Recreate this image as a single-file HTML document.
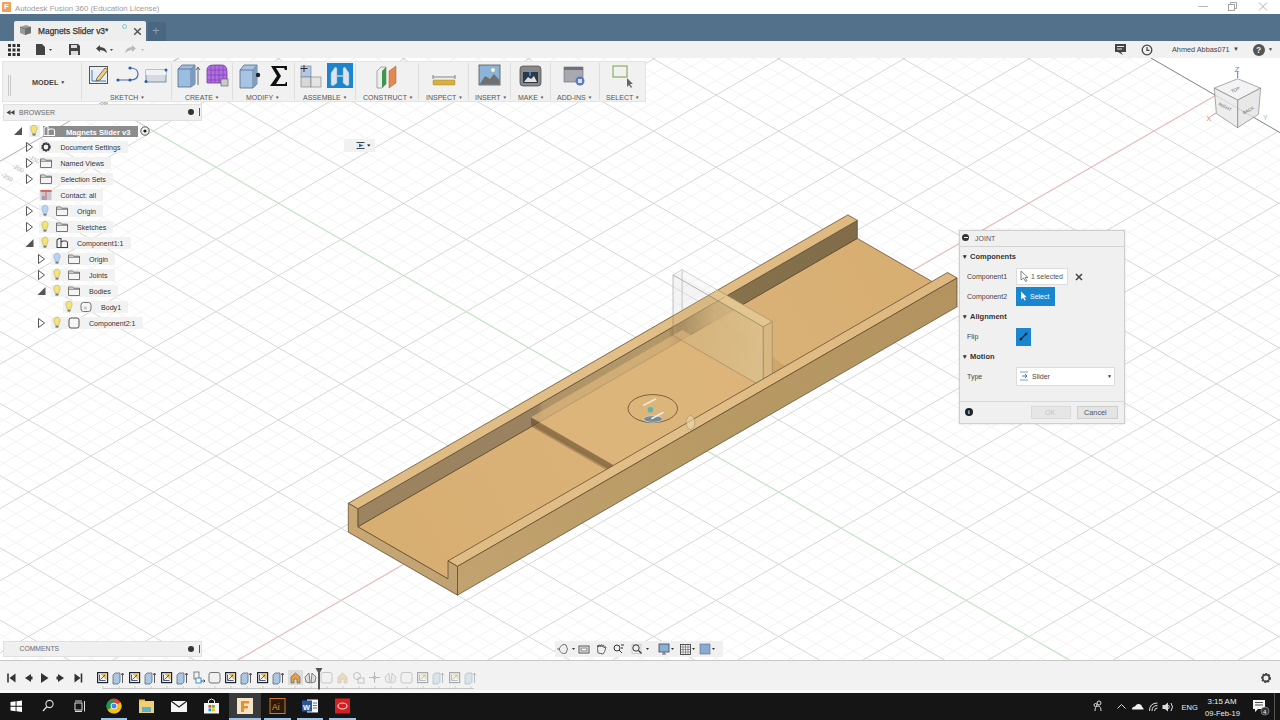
<!DOCTYPE html>
<html><head><meta charset="utf-8">
<style>
*{box-sizing:border-box;margin:0;padding:0}
html,body{width:1280px;height:720px;overflow:hidden;background:#fff;font-family:"Liberation Sans",sans-serif;color:#3c3c3c}
.a{position:absolute}
#title{left:0;top:0;width:1280px;height:14px;background:#fff}
#tabs{left:0;top:14px;width:1280px;height:27px;background:#54718c}
#qat{left:0;top:41px;width:1280px;height:17px;background:#f1f1f1}
#vp{left:0;top:0;width:1280px;height:720px}
#tl{left:0;top:660px;width:1280px;height:33px;background:#f2f2f2;border-top:1px solid #c8c8c8;border-bottom:3px solid #fafafa}
#task{left:0;top:693px;width:1280px;height:27px;background:#151515}
.t{position:absolute;white-space:nowrap;line-height:1}
.panel{background:#eeeeee;border:1px solid #d6d6d6}
.lbl{font-size:7px;color:#555;letter-spacing:0}
.row{position:absolute;height:12px;font-size:7.1px;color:#333;line-height:12px;white-space:nowrap}
.rbg{position:absolute;height:12px;background:rgba(238,238,238,0.85)}
</style></head><body>
<!-- viewport grid + model -->
<svg id="vp" class="a" width="1280" height="720" viewBox="0 0 1280 720">
<rect x="0" y="58" width="1280" height="602" fill="#ffffff"/>
<g clip-path="url(#vpclip)">
<defs><clipPath id="vpclip"><polygon points="0,161.25 178.8,58 1150.9,58 1280,132.6 1280,660 0,660"/></clipPath></defs>
<path d="M0 -708.38L1280 30.69M0 -693.94L1280 45.13M0 -665.06L1280 74.01M0 -650.62L1280 88.45M0 -636.18L1280 102.89M0 -621.74L1280 117.34M0 -592.86L1280 146.22M0 -578.42L1280 160.65M0 -563.98L1280 175.10M0 -549.54L1280 189.53M0 -520.66L1280 218.41M0 -506.22L1280 232.85M0 -491.78L1280 247.29M0 -477.34L1280 261.73M0 -448.46L1280 290.61M0 -434.02L1280 305.05M0 -419.58L1280 319.49M0 -405.14L1280 333.93M0 -376.26L1280 362.81M0 -361.82L1280 377.25M0 -347.38L1280 391.69M0 -332.94L1280 406.13M0 -304.06L1280 435.01M0 -289.62L1280 449.45M0 -275.18L1280 463.89M0 -260.74L1280 478.33M0 -231.86L1280 507.21M0 -217.42L1280 521.65M0 -202.98L1280 536.10M0 -188.54L1280 550.53M0 -159.66L1280 579.41M0 -145.22L1280 593.86M0 -130.78L1280 608.29M0 -116.34L1280 622.74M0 -87.46L1280 651.62M0 -73.02L1280 666.05M0 -58.58L1280 680.50M0 -44.14L1280 694.93M0 -15.26L1280 723.82M0 -0.82L1280 738.25M0 13.62L1280 752.70M0 28.06L1280 767.13M0 56.94L1280 796.01M0 71.38L1280 810.46M0 85.82L1280 824.89M0 100.26L1280 839.34M0 129.14L1280 868.22M0 143.58L1280 882.65M0 158.02L1280 897.10M0 172.46L1280 911.54M0 201.34L1280 940.41M0 215.78L1280 954.86M0 230.22L1280 969.30M0 244.66L1280 983.74M0 273.54L1280 1012.62M0 287.98L1280 1027.06M0 302.42L1280 1041.49M0 316.86L1280 1055.93M0 345.74L1280 1084.82M0 360.18L1280 1099.26M0 374.62L1280 1113.69M0 389.06L1280 1128.13M0 417.94L1280 1157.02M0 432.38L1280 1171.45M0 446.82L1280 1185.89M0 461.26L1280 1200.34M0 490.14L1280 1229.22M0 504.58L1280 1243.65M0 519.02L1280 1258.10M0 533.46L1280 1272.54M0 562.34L1280 1301.41M0 576.78L1280 1315.86M0 591.22L1280 1330.30M0 605.66L1280 1344.74M0 634.54L1280 1373.62M0 648.98L1280 1388.06M0 663.42L1280 1402.50M0 677.86L1280 1416.93M0 32.01L1280 -707.06M0 46.45L1280 -692.62M0 60.89L1280 -678.18M0 89.77L1280 -649.30M0 104.21L1280 -634.86M0 118.65L1280 -620.42M0 133.09L1280 -605.98M0 161.97L1280 -577.10M0 176.41L1280 -562.66M0 190.85L1280 -548.22M0 205.29L1280 -533.78M0 234.17L1280 -504.90M0 248.61L1280 -490.46M0 263.05L1280 -476.02M0 277.49L1280 -461.58M0 306.37L1280 -432.70M0 320.81L1280 -418.26M0 335.25L1280 -403.82M0 349.69L1280 -389.38M0 378.57L1280 -360.50M0 393.01L1280 -346.06M0 407.45L1280 -331.62M0 421.89L1280 -317.18M0 450.77L1280 -288.30M0 465.21L1280 -273.86M0 479.65L1280 -259.42M0 494.09L1280 -244.98M0 522.97L1280 -216.10M0 537.41L1280 -201.66M0 551.85L1280 -187.22M0 566.29L1280 -172.78M0 595.17L1280 -143.90M0 609.61L1280 -129.46M0 624.05L1280 -115.02M0 638.49L1280 -100.58M0 667.37L1280 -71.70M0 681.81L1280 -57.26M0 696.25L1280 -42.82M0 710.69L1280 -28.38M0 739.57L1280 0.50M0 754.01L1280 14.94M0 768.45L1280 29.38M0 782.89L1280 43.82M0 811.77L1280 72.70M0 826.21L1280 87.14M0 840.65L1280 101.58M0 855.09L1280 116.02M0 883.97L1280 144.90M0 898.41L1280 159.34M0 912.85L1280 173.78M0 927.29L1280 188.22M0 956.17L1280 217.10M0 970.61L1280 231.54M0 985.05L1280 245.98M0 999.49L1280 260.42M0 1028.37L1280 289.30M0 1042.81L1280 303.74M0 1057.25L1280 318.18M0 1071.69L1280 332.62M0 1100.57L1280 361.50M0 1115.01L1280 375.94M0 1129.45L1280 390.38M0 1143.89L1280 404.82M0 1172.77L1280 433.70M0 1187.21L1280 448.14M0 1201.65L1280 462.58M0 1216.09L1280 477.02M0 1244.97L1280 505.90M0 1259.41L1280 520.34M0 1273.85L1280 534.78M0 1288.29L1280 549.22M0 1317.17L1280 578.10M0 1331.61L1280 592.54M0 1346.05L1280 606.98M0 1360.49L1280 621.42M0 1389.37L1280 650.30M0 1403.81L1280 664.74M0 1418.25L1280 679.18" stroke="#f3f3f3" stroke-width="1" fill="none"/>
<path d="M0 -679.50L1280 59.57M0 -607.30L1280 131.77M0 -535.10L1280 203.98M0 -462.90L1280 276.17M0 -390.70L1280 348.37M0 -318.50L1280 420.57M0 -246.30L1280 492.77M0 -174.10L1280 564.97M0 -101.90L1280 637.17M0 -29.70L1280 709.38M0 42.50L1280 781.58M0 114.70L1280 853.77M0 186.90L1280 925.98M0 259.10L1280 998.17M0 331.30L1280 1070.38M0 403.50L1280 1142.58M0 475.70L1280 1214.78M0 547.90L1280 1286.97M0 620.10L1280 1359.18M0 75.33L1280 -663.74M0 147.53L1280 -591.54M0 219.73L1280 -519.34M0 291.93L1280 -447.14M0 364.13L1280 -374.94M0 436.33L1280 -302.74M0 508.53L1280 -230.54M0 580.73L1280 -158.34M0 652.93L1280 -86.14M0 725.13L1280 -13.94M0 797.33L1280 58.26M0 869.53L1280 130.46M0 941.73L1280 202.66M0 1013.93L1280 274.86M0 1086.13L1280 347.06M0 1158.33L1280 419.26M0 1230.53L1280 491.46M0 1302.73L1280 563.66M0 1374.93L1280 635.86" stroke="#d6d6d6" stroke-width="1" fill="none"/>
<path d="M0 42.50L1280 781.58" stroke="#c4e8c4" stroke-width="1.1"/>
<path d="M0 797.33L1280 58.26" stroke="#ecbcbc" stroke-width="1.1"/>
</g>
<path d="M0 161.25 L178.8 58" stroke="#a8a8a8" stroke-width="0.9"/>
<path d="M1150.9 58 L1280 132.6" stroke="#808080" stroke-width="1"/>
<g font-family="Liberation Sans" font-size="6" fill="#b4b4b4"><text transform="translate(1,176) rotate(30)">-250</text><text transform="translate(12,167) rotate(30)">-200</text><text transform="translate(28,158) rotate(30)">-150</text></g>
<defs>
<linearGradient id="gFloor" gradientUnits="userSpaceOnUse" x1="350" y1="560" x2="940" y2="240"><stop offset="0" stop-color="#d7ad71"/><stop offset="0.5" stop-color="#dbb379"/><stop offset="1" stop-color="#d7ad71"/></linearGradient>
<linearGradient id="gTop" gradientUnits="userSpaceOnUse" x1="350" y1="540" x2="950" y2="220"><stop offset="0" stop-color="#dfbb84"/><stop offset="0.5" stop-color="#e2be88"/><stop offset="1" stop-color="#ddb77e"/></linearGradient>
<linearGradient id="gFront" gradientUnits="userSpaceOnUse" x1="460" y1="590" x2="960" y2="300"><stop offset="0" stop-color="#c2a36f"/><stop offset="0.5" stop-color="#b89a65"/><stop offset="1" stop-color="#b39460"/></linearGradient>
<linearGradient id="gInner" gradientUnits="userSpaceOnUse" x1="358" y1="0" x2="858" y2="0">
 <stop offset="0" stop-color="#9c8460"/><stop offset="0.36" stop-color="#9a8260"/><stop offset="0.37" stop-color="#b09468"/><stop offset="0.62" stop-color="#b49868"/><stop offset="0.64" stop-color="#8a7450"/><stop offset="1" stop-color="#806c48"/></linearGradient>
<linearGradient id="gEnd" x1="0" y1="0" x2="1" y2="1"><stop offset="0" stop-color="#c9a872"/><stop offset="1" stop-color="#c0a272"/></linearGradient>
</defs>
<polygon points="357.8,526.8 857.3,238.4 947.5,290.5 448.0,578.9" fill="url(#gFloor)" stroke="#5e4a2c" stroke-width="0.75" stroke-linejoin="round"/>
<polygon points="357.8,508.8 857.3,220.4 857.3,238.4 357.8,526.8" fill="url(#gInner)" stroke="#5e4a2c" stroke-width="0.75" stroke-linejoin="round"/>
<polygon points="348.3,503.3 847.8,214.9 857.3,220.4 357.8,508.8" fill="url(#gTop)" stroke="#5e4a2c" stroke-width="0.75" stroke-linejoin="round"/>
<polygon points="531.0,417.3 682.1,330.1 772.3,382.1 621.2,469.4" fill="#ddb67c" fill-opacity="0.72"/>
<linearGradient id="gBand" gradientUnits="userSpaceOnUse" x1="573.5" y1="451.3" x2="578.2" y2="443.1"><stop offset="0" stop-color="#6a5030" stop-opacity="0.2"/><stop offset="0.3" stop-color="#6a5030" stop-opacity="0.68"/><stop offset="0.8" stop-color="#6a5030" stop-opacity="0.62"/><stop offset="1" stop-color="#6a5030" stop-opacity="0.1"/></linearGradient>
<polygon points="531.0,417.3 621.2,469.4 621.2,478.9 531.0,426.8" fill="url(#gBand)"/>
<clipPath id="belowWall"><polygon points="261.7,553.3 934.4,164.9 1280.0,720.0 0.0,720.0"/></clipPath>
<clipPath id="aboveWall"><polygon points="261.7,553.3 934.4,164.9 1280.0,0.0 0.0,0.0"/></clipPath>
<polygon points="682.1,269.6 708.1,306.6 798.3,376.6 772.3,391.6" fill="#5a4020" fill-opacity="0.10" clip-path="url(#belowWall)"/>
<polygon points="673.0,274.8 763.2,326.9 763.2,387.4 673.0,335.3" fill="#e4e4e4" fill-opacity="0.4" stroke="#b0b0b0" stroke-width="0.8" clip-path="url(#aboveWall)"/>
<path d="M682.1 269.6 L682.1 330.1" stroke="#b8b8b8" stroke-width="0.8" clip-path="url(#aboveWall)"/>
<path d="M673.0 326.8 L673.0 335.3" stroke="#8a7a60" stroke-width="0.6" stroke-opacity="0.6"/>
<polygon points="673.0,274.8 682.1,269.6 772.3,321.6 763.2,326.9" fill="#e0e0e0" fill-opacity="0.2" stroke="#b8b8b8" stroke-width="0.6" clip-path="url(#aboveWall)"/>
<polygon points="673.0,274.8 682.1,269.6 772.3,321.6 763.2,326.9" fill="#e2c690" stroke="#a08a66" stroke-width="0.6" clip-path="url(#belowWall)"/>
<polygon points="763.2,326.9 772.3,321.6 772.3,382.1 763.2,387.4" fill="#d8b880" stroke="#9a8260" stroke-width="0.6"/>
<linearGradient id="gPlate" gradientUnits="userSpaceOnUse" x1="673" y1="0" x2="764" y2="0"><stop offset="0" stop-color="#d2b27c" stop-opacity="0.35"/><stop offset="0.45" stop-color="#d6b882" stop-opacity="0.85"/><stop offset="1" stop-color="#dbbf8a" stop-opacity="0.97"/></linearGradient>
<polygon points="673.0,274.8 763.2,326.9 763.2,387.4 673.0,335.3" fill="url(#gPlate)" stroke="#9a8262" stroke-width="0.6" clip-path="url(#belowWall)"/>
<path d="M663.5 321.3 L715.5 291.3 M673.0 326.8 L725.0 296.8" stroke="#7a6444" stroke-width="0.6" stroke-opacity="0.5"/>
<polygon points="448.0,560.9 947.5,272.5 957.0,278.0 457.5,566.4" fill="url(#gTop)" stroke="#5e4a2c" stroke-width="0.75" stroke-linejoin="round"/>
<polygon points="457.5,566.4 957.0,278.0 957.0,306.8 457.5,595.1" fill="url(#gFront)" stroke="#5e4a2c" stroke-width="0.75" stroke-linejoin="round"/>
<polygon points="348.3,503.3 357.8,508.8 357.8,526.8 448.0,578.9 448.0,560.9 457.5,566.4 457.5,595.1 348.3,532.1" fill="url(#gEnd)" stroke="#5e4a2c" stroke-width="0.75" stroke-linejoin="round"/>
<ellipse cx="652.8" cy="408.6" rx="24.7" ry="14" fill="none" stroke="#6a5030" stroke-width="0.85"/>
<path d="M643.5 405.3 L655.6 399" stroke="#f4e8e0" stroke-width="1.5" stroke-linecap="round"/>
<circle cx="650.4" cy="409.8" r="2.8" fill="#62b4a8"/>
<ellipse cx="653" cy="419" rx="9.5" ry="3.3" fill="#7a8a92" stroke="#c8d4d0" stroke-width="0.8"/>
<path d="M651.8 418.5 L662.9 412.6" stroke="#f6f0ea" stroke-width="1.5" stroke-linecap="round"/>
<ellipse cx="690.5" cy="422.5" rx="4.3" ry="7" fill="#ecdcb0" fill-opacity="0.55" stroke="#9a8050" stroke-width="0.6" stroke-opacity="0.8"/>
</svg>

<div id="title" class="a">
  <div class="a" style="left:2px;top:2px;width:9px;height:10px;background:#f0a050;border-radius:1px"></div>
  <div class="t" style="left:4px;top:3px;font-size:8px;font-weight:bold;color:#fff">F</div>
  <div class="t" style="left:15px;top:4.5px;font-size:7.8px;color:#9a9a9a">Autodesk Fusion 360 (Education License)</div>
  <svg class="a" style="left:1195px;top:0" width="85" height="14" viewBox="1195 0 85 14"><path d="M1198.5 6.5 H1208" stroke="#b4b4b4" stroke-width="1"/><rect x="1228.5" y="4.5" width="6" height="6" fill="none" stroke="#9a9a9a" stroke-width="0.9"/><path d="M1230.5 4.5 V2.5 H1236.5 V8.5 H1234.5" fill="none" stroke="#9a9a9a" stroke-width="0.9"/><path d="M1259 2.5 L1267 10.5 M1267 2.5 L1259 10.5" stroke="#b0b0b0" stroke-width="1"/></svg>
</div>

<div id="tabs" class="a">
  <div class="a" style="left:14px;top:7px;width:132px;height:20px;background:#eeeeee;border-radius:2px 2px 0 0"></div>
  <div class="a" style="left:148px;top:8px;width:18px;height:19px;background:#4a6681"></div>
  <div class="t" style="left:152px;top:10px;font-size:13px;color:#8aa0b6">+</div>
  <svg class="a" style="left:19px;top:10px" width="13" height="12" viewBox="0 0 13 12"><path d="M1 3 L7 1 L12 3 L12 9 L6 11 L1 9Z" fill="#9a9a9a"/><path d="M1 3 L6 5 L12 3" fill="none" stroke="#6e6e6e" stroke-width="0.8"/><path d="M6 5 L6 11 L12 9 L12 3Z" fill="#6f6f6f"/></svg>
  <div class="t" style="left:38px;top:13.3px;font-size:8.4px;color:#333;font-weight:normal;-webkit-text-stroke:0.25px #333">Magnets Slider v3*</div>
  <div class="a" style="left:122px;top:10px;width:5px;height:5px;border:1px solid #7cc;border-radius:50%"></div>
  <svg class="a" style="left:133px;top:13px" width="9" height="9" viewBox="0 0 9 9"><path d="M1.2 1.2 L7.8 7.8 M7.8 1.2 L1.2 7.8" stroke="#555" stroke-width="1.5"/></svg>
</div>

<div id="qat" class="a">
  <svg class="a" style="left:8px;top:3px" width="12" height="12" viewBox="0 0 12 12"><g fill="#333"><rect x="0" y="0" width="3" height="3"/><rect x="4.5" y="0" width="3" height="3"/><rect x="9" y="0" width="3" height="3"/><rect x="0" y="4.5" width="3" height="3"/><rect x="4.5" y="4.5" width="3" height="3"/><rect x="9" y="4.5" width="3" height="3"/><rect x="0" y="9" width="3" height="3"/><rect x="4.5" y="9" width="3" height="3"/><rect x="9" y="9" width="3" height="3"/></g></svg>
  <svg class="a" style="left:36px;top:3px" width="18" height="11" viewBox="0 0 18 11"><path d="M0 0 H6 L9 3 V11 H0Z" fill="#444"/><path d="M13 5 L16 5 L14.5 7Z" fill="#444"/></svg>
  <svg class="a" style="left:69px;top:3px" width="11" height="11" viewBox="0 0 11 11"><path d="M0 0 H9 L11 2 V11 H0Z" fill="#444"/><rect x="2" y="1" width="6" height="3" fill="#ddd"/><rect x="2" y="7" width="7" height="4" fill="#ddd"/></svg>
  <svg class="a" style="left:96px;top:4px" width="20" height="9" viewBox="0 0 20 9"><path d="M0 3.5 L4 0 V2 Q10 2 11 8 Q8 5 4 5 V7Z" fill="#444"/><path d="M14 4 L17 4 L15.5 6Z" fill="#444"/></svg>
  <svg class="a" style="left:125px;top:4px" width="20" height="9" viewBox="0 0 20 9"><path d="M11 3.5 L7 0 V2 Q1 2 0 8 Q3 5 7 5 V7Z" fill="#bbb"/><path d="M16 4 L19 4 L17.5 6Z" fill="#bbb"/></svg>
  <!-- right side -->
  <svg class="a" style="left:1115px;top:3px" width="11" height="11" viewBox="0 0 11 11"><path d="M0 0 H11 V8 H6 L8 11 L3 8 H0Z" fill="#444"/><rect x="2" y="2" width="7" height="1" fill="#eee"/><rect x="2" y="4.5" width="5" height="1" fill="#eee"/></svg>
  <svg class="a" style="left:1141px;top:3px" width="12" height="12" viewBox="0 0 12 12"><circle cx="6" cy="6" r="4.8" fill="none" stroke="#444" stroke-width="1.3"/><path d="M6 3 V6.3 H8.5" fill="none" stroke="#444" stroke-width="1.2"/></svg>
  <div class="t" style="left:1172px;top:5px;font-size:7.3px;color:#444">Ahmed Abbas071</div>
  <div class="t" style="left:1233px;top:5px;font-size:6px;color:#444">&#x25BC;</div>
  <div class="a" style="left:1253px;top:3px;width:12px;height:12px;background:#555;border-radius:50%"></div>
  <div class="t" style="left:1256px;top:5px;font-size:8.5px;color:#eee;font-weight:bold">?</div>
  <div class="t" style="left:1268px;top:6px;font-size:5px;color:#444">&#x25BC;</div>
</div>

<!-- TOOLBAR -->
<div class="a" style="left:2px;top:61px;width:644px;height:41px;background:#f1f1f1;border:1px solid #e4e4e4"></div>
<div class="a" style="left:81px;top:63px;width:1px;height:37px;background:#dedede"></div>
<div class="a" style="left:171px;top:63px;width:1px;height:37px;background:#dedede"></div>
<div class="a" style="left:232px;top:63px;width:1px;height:37px;background:#dedede"></div>
<div class="a" style="left:294px;top:63px;width:1px;height:37px;background:#dedede"></div>
<div class="a" style="left:355px;top:63px;width:1px;height:37px;background:#dedede"></div>
<div class="a" style="left:418px;top:63px;width:1px;height:37px;background:#dedede"></div>
<div class="a" style="left:468px;top:63px;width:1px;height:37px;background:#dedede"></div>
<div class="a" style="left:510px;top:63px;width:1px;height:37px;background:#dedede"></div>
<div class="a" style="left:550px;top:63px;width:1px;height:37px;background:#dedede"></div>
<div class="a" style="left:599px;top:63px;width:1px;height:37px;background:#dedede"></div>
<div class="a" style="left:8px;top:75px;width:1px;height:21px;background:#c8c8c8"></div>
<div class="a" style="left:10px;top:75px;width:1px;height:21px;background:#c8c8c8"></div>
<div class="t" style="left:32px;top:79px;font-size:7.3px;font-weight:bold;color:#444">MODEL <span style="font-size:5px;vertical-align:1px">&#x25BC;</span></div>
<!-- labels -->
<div class="t lbl" style="left:110px;top:94px">SKETCH <span style="font-size:4.5px;vertical-align:1px">&#x25BC;</span></div>
<div class="t lbl" style="left:185px;top:94px">CREATE <span style="font-size:4.5px;vertical-align:1px">&#x25BC;</span></div>
<div class="t lbl" style="left:246px;top:94px">MODIFY <span style="font-size:4.5px;vertical-align:1px">&#x25BC;</span></div>
<div class="t lbl" style="left:303px;top:94px">ASSEMBLE <span style="font-size:4.5px;vertical-align:1px">&#x25BC;</span></div>
<div class="t lbl" style="left:363px;top:94px">CONSTRUCT <span style="font-size:4.5px;vertical-align:1px">&#x25BC;</span></div>
<div class="t lbl" style="left:426px;top:94px">INSPECT <span style="font-size:4.5px;vertical-align:1px">&#x25BC;</span></div>
<div class="t lbl" style="left:475px;top:94px">INSERT <span style="font-size:4.5px;vertical-align:1px">&#x25BC;</span></div>
<div class="t lbl" style="left:518px;top:94px">MAKE <span style="font-size:4.5px;vertical-align:1px">&#x25BC;</span></div>
<div class="t lbl" style="left:557px;top:94px">ADD-INS <span style="font-size:4.5px;vertical-align:1px">&#x25BC;</span></div>
<div class="t lbl" style="left:606px;top:94px">SELECT <span style="font-size:4.5px;vertical-align:1px">&#x25BC;</span></div>
<!-- icons -->
<svg class="a" style="left:0;top:56px" width="650" height="36" viewBox="0 56 650 36">
 <!-- sketch -->
 <rect x="89.5" y="66.5" width="18" height="17" fill="#e8eef4" stroke="#555" stroke-width="1"/>
 <path d="M92 81 H106 M92 81 V70" stroke="#4a7ab0" stroke-width="1"/>
 <path d="M97 78 L105 68 L108 70 L100 80 L96 81Z" fill="#f0d070" stroke="#555" stroke-width="0.8"/>
 <!-- line arc -->
 <path d="M117 80 H130 Q138 80 138 74 Q138 68 130 68" fill="none" stroke="#4a6fa8" stroke-width="1.2"/>
 <circle cx="118" cy="80" r="1.6" fill="#2a5fb0"/><circle cx="130" cy="80" r="1.6" fill="#2a5fb0"/><circle cx="130" cy="68" r="1.6" fill="#2a5fb0"/>
 <!-- rect -->
 <rect x="146" y="70" width="20" height="12" fill="#d4dae4" stroke="#6a7a90" stroke-width="0.8"/>
 <rect x="146" y="70" width="20" height="5" fill="#eef2f6"/>
 <circle cx="146" cy="81.5" r="1.5" fill="#2a5fb0"/><circle cx="166" cy="70" r="1.5" fill="#2a5fb0"/>
 <!-- extrude box -->
 <path d="M178 69 L182 65 L195 65 L195 84 L191 87 L178 87Z" fill="#9bbde0" stroke="#5a6a80" stroke-width="0.8"/>
 <path d="M178 69 L191 69 L195 65 M191 69 V87" fill="none" stroke="#5a6a80" stroke-width="0.8"/>
 <path d="M191 69 L195 65 V84 L191 87Z" fill="#7a9cc0"/>
 <path d="M198 85 V68 M196 70 L198 67 L200 70" stroke="#444" stroke-width="0.8" fill="none"/>
 <!-- mesh -->
 <path d="M207 70 Q207 65 214 65 H222 Q227 65 227 72 V83 H207Z" fill="#b070e0" stroke="#7040a0" stroke-width="0.8"/>
 <path d="M207 70 H227 M207 75 H227 M207 80 H227 M211 65 V83 M215 65 V83 M219 65 V83 M223 65 V83" stroke="#7a3ab0" stroke-width="0.6"/>
 <rect x="221" y="79" width="7" height="7" fill="#ccc" stroke="#555" stroke-width="0.6"/>
 <!-- press pull -->
 <path d="M240 70 L244 65 L257 65 L257 84 L253 88 L240 88Z" fill="#a8c4e4" stroke="#5a6a80" stroke-width="0.8"/>
 <path d="M240 70 H253 L257 65 M253 70 V88" fill="none" stroke="#5a6a80" stroke-width="0.8"/>
 <path d="M253 70 L257 65 V84 L253 88Z" fill="#7fa0c4"/>
 <circle cx="258" cy="75" r="2.2" fill="#222"/>
 <!-- sigma -->
 <path d="M271 66 H287 V70 H285 L284 68 H276 L281 76 L276 84 H285 L286 82 H287 V86 H270 L277 76Z" fill="#111"/>
 <!-- new component -->
 <rect x="301" y="66" width="10" height="11" fill="#b0c8e4" stroke="#6a7a90" stroke-width="0.6"/>
 <rect x="301" y="77" width="10" height="10" fill="#d8d8d8" stroke="#7a7a7a" stroke-width="0.6"/>
 <rect x="311" y="77" width="10" height="10" fill="#e4e4e4" stroke="#7a7a7a" stroke-width="0.6"/>
 <path d="M304 65 V72 M300.5 68.5 H307.5" stroke="#333" stroke-width="1"/>
 <!-- joint (highlighted) -->
 <rect x="327" y="63" width="26" height="25" fill="#1b86cf"/>
 <path d="M331 73 L335 67 L337 68 L337 83 L333 86 L331 85Z" fill="#d8e4ee" stroke="#8aa" stroke-width="0.5"/>
 <path d="M349 73 L345 67 L343 68 L343 83 L347 86 L349 85Z" fill="#d8e4ee" stroke="#8aa" stroke-width="0.5"/>
 <path d="M337 76 H343" stroke="#d8e4ee" stroke-width="1.2"/>
 <!-- construct -->
 <path d="M377 71 L381 67 L386 67 L386 84 L382 88 L377 88Z" fill="#eee" stroke="#777" stroke-width="0.6"/>
 <path d="M382 71 L386 67 V84 L382 88Z" fill="#3a9a4a"/>
 <path d="M389 71 L396 66 V83 L389 88Z" fill="#e08a50" stroke="#a06030" stroke-width="0.5"/>
 <!-- inspect -->
 <path d="M433 75 V79 M455 75 V79 M433 77 H455" stroke="#555" stroke-width="0.7"/>
 <rect x="433" y="80" width="22" height="5" rx="1" fill="#d8b040" stroke="#a88a30" stroke-width="0.5"/>
 <!-- insert -->
 <rect x="479" y="65" width="21" height="20" fill="#8cb4d8" stroke="#555" stroke-width="0.8"/>
 <path d="M479.5 84.5 L485 76 L490 79 L494 74 L499.5 80 V84.5Z" fill="#707070"/>
 <circle cx="493" cy="70" r="2" fill="#f4f4d0"/>
 <!-- make -->
 <rect x="520" y="66" width="21" height="20" rx="3" fill="#888" stroke="#555" stroke-width="0.8"/>
 <rect x="523" y="72" width="15" height="11" fill="#2a3a4a"/>
 <path d="M524 82 L528 77 L531 79 L534 76 L537 82Z" fill="#e0e0e0"/>
 <path d="M530 71 V76" stroke="#5ab0f0" stroke-width="1.2"/>
 <!-- add-ins -->
 <rect x="564" y="67" width="19" height="15" fill="#a8a8b0" stroke="#6a6a70" stroke-width="0.6"/>
 <rect x="564" y="67" width="19" height="3" fill="#707078"/>
 <circle cx="580" cy="81" r="4.5" fill="#5a7ac0"/>
 <rect x="578" y="79" width="4" height="4" fill="#dde"/>
 <!-- select -->
 <rect x="613" y="66" width="14" height="11" fill="none" stroke="#8ab060" stroke-width="1.2"/>
 <path d="M627 78 L627 87 L629 85 L631 88 L632 87 L630 84 L633 84Z" fill="#666"/>
</svg>

<!-- BROWSER -->
<div class="a" style="left:3px;top:104px;width:199px;height:16.5px;background:#f0f0f0;border:1px solid #e0e0e0"></div>
<svg class="a" style="left:99px;top:100px" width="12" height="8" viewBox="0 0 12 8"><path d="M2 5 Q6 1 9 3 Q8 5 5 4" fill="none" stroke="#aaa" stroke-width="0.8"/></svg>
<svg class="a" style="left:6px;top:109px" width="10" height="7" viewBox="0 0 10 7"><path d="M0.5 3.5 L4.5 1 V6Z M4.5 3.5 L8.5 1 V6Z" fill="#444"/></svg>
<div class="t" style="left:19px;top:109px;font-size:7px;color:#6a6a6a">BROWSER</div>
<div class="a" style="left:188px;top:109px;width:6px;height:6px;border-radius:50%;background:#333"></div>
<div class="a" style="left:199px;top:108px;width:1px;height:8px;background:#555"></div>
<div class="a" style="left:29px;top:125px;width:11px;height:12px;background:rgba(236,236,236,0.9)"></div>
<div class="a" style="left:43px;top:126px;width:95px;height:11px;background:#8c8c8c"></div>
<div class="t" style="left:66px;top:128.7px;font-size:7.6px;color:#fff;font-weight:bold">Magnets Slider v3</div>
<div class="a" style="left:39px;top:141px;width:88.5px;height:12px;background:rgba(241,241,241,0.9)"></div>
<div class="t" style="left:60.5px;top:144.7px;font-size:7.1px;color:#333">Document Settings</div>
<div class="a" style="left:39px;top:157px;width:72.2px;height:12px;background:rgba(241,241,241,0.9)"></div>
<div class="t" style="left:60.5px;top:160.7px;font-size:7.1px;color:#333">Named Views</div>
<div class="a" style="left:39px;top:173px;width:73.9px;height:12px;background:rgba(241,241,241,0.9)"></div>
<div class="t" style="left:60.5px;top:176.7px;font-size:7.1px;color:#333">Selection Sets</div>
<div class="a" style="left:39px;top:189px;width:64.0px;height:12px;background:rgba(241,241,241,0.9)"></div>
<div class="t" style="left:60.5px;top:192.7px;font-size:7.1px;color:#333">Contact: all</div>
<div class="a" style="left:39px;top:205px;width:63.9px;height:12px;background:rgba(241,241,241,0.9)"></div>
<div class="t" style="left:77px;top:208.7px;font-size:7.1px;color:#333">Origin</div>
<div class="a" style="left:39px;top:221px;width:74.2px;height:12px;background:rgba(241,241,241,0.9)"></div>
<div class="t" style="left:77px;top:224.7px;font-size:7.1px;color:#333">Sketches</div>
<div class="a" style="left:39px;top:237px;width:91.6px;height:12px;background:rgba(241,241,241,0.9)"></div>
<div class="t" style="left:77px;top:240.7px;font-size:7.1px;color:#333">Component1:1</div>
<div class="a" style="left:51px;top:253px;width:63.9px;height:12px;background:rgba(241,241,241,0.9)"></div>
<div class="t" style="left:89px;top:256.7px;font-size:7.1px;color:#333">Origin</div>
<div class="a" style="left:51px;top:269px;width:63.5px;height:12px;background:rgba(241,241,241,0.9)"></div>
<div class="t" style="left:89px;top:272.7px;font-size:7.1px;color:#333">Joints</div>
<div class="a" style="left:51px;top:285px;width:66.7px;height:12px;background:rgba(241,241,241,0.9)"></div>
<div class="t" style="left:89px;top:288.7px;font-size:7.1px;color:#333">Bodies</div>
<div class="a" style="left:63px;top:301px;width:65.1px;height:12px;background:rgba(241,241,241,0.9)"></div>
<div class="t" style="left:101px;top:304.7px;font-size:7.1px;color:#333">Body1</div>
<div class="a" style="left:51px;top:317px;width:91.6px;height:12px;background:rgba(241,241,241,0.9)"></div>
<div class="t" style="left:89px;top:320.7px;font-size:7.1px;color:#333">Component2:1</div>
<svg class="a" style="left:0;top:0" width="210" height="340" viewBox="0 0 210 340"><circle cx="145" cy="131" r="4.2" fill="#f4f4f4" stroke="#444" stroke-width="0.9"/><circle cx="145" cy="131" r="1.6" fill="#222"/>
<path d="M22 127 L22 135 L14 135Z" fill="#555"/>
<path d="M31 129.5 A3.2 3.2 0 1 1 37 129.5 Q36 132 35.6 133.5 H32.4 Q32 132 31 129.5Z" fill="#f3e47a" stroke="#a89850" stroke-width="0.5"/><rect x="32.5" y="133.8" width="3" height="1.8" fill="#777"/>
<path d="M44 135.5 V128 L46 126.5 H48 V130 L50 129 H53 Q54.5 129 54.5 131 V135.5Z M48 130 V135.5" fill="none" stroke="#fff" stroke-width="1.1"/>
<path d="M26.5 142.5 L32.5 147 L26.5 151.5Z" fill="none" stroke="#444" stroke-width="0.9"/>
<circle cx="46" cy="147" r="3.6" fill="none" stroke="#333" stroke-width="2.2" stroke-dasharray="1.6 0.7"/><circle cx="46" cy="147" r="3.2" fill="none" stroke="#333" stroke-width="1.3"/><circle cx="46" cy="147" r="1.3" fill="#eee"/>
<path d="M26.5 158.5 L32.5 163 L26.5 167.5Z" fill="none" stroke="#444" stroke-width="0.9"/>
<path d="M40.5 159 H44.5 L46 160.2 H51.5 V167.5 H40.5Z M40.5 161.2 H51.5" fill="#f4f4f4" stroke="#555" stroke-width="0.8"/>
<path d="M26.5 174.5 L32.5 179 L26.5 183.5Z" fill="none" stroke="#444" stroke-width="0.9"/>
<path d="M40.5 175 H44.5 L46 176.2 H51.5 V183.5 H40.5Z M40.5 177.2 H51.5" fill="#f4f4f4" stroke="#555" stroke-width="0.8"/>
<rect x="40.5" y="190" width="11" height="10" fill="#c8c8d0"/><rect x="40.5" y="190" width="11" height="2" fill="#e06060"/><path d="M46 192 V200" stroke="#e06060" stroke-width="1"/><rect x="42" y="196" width="3" height="4" fill="#a0a0b0"/>
<path d="M26.5 206.5 L32.5 211 L26.5 215.5Z" fill="none" stroke="#444" stroke-width="0.9"/>
<path d="M42 209.5 A3.2 3.2 0 1 1 48 209.5 Q47 212 46.6 213.5 H43.4 Q43 212 42 209.5Z" fill="#b8d4f4" stroke="#7a98c0" stroke-width="0.5"/><rect x="43.5" y="213.8" width="3" height="1.8" fill="#777"/>
<path d="M56.5 207 H60.5 L62 208.2 H67.5 V215.5 H56.5Z M56.5 209.2 H67.5" fill="#f4f4f4" stroke="#555" stroke-width="0.8"/>
<path d="M26.5 222.5 L32.5 227 L26.5 231.5Z" fill="none" stroke="#444" stroke-width="0.9"/>
<path d="M42 225.5 A3.2 3.2 0 1 1 48 225.5 Q47 228 46.6 229.5 H43.4 Q43 228 42 225.5Z" fill="#f3e47a" stroke="#a89850" stroke-width="0.5"/><rect x="43.5" y="229.8" width="3" height="1.8" fill="#777"/>
<path d="M56.5 223 H60.5 L62 224.2 H67.5 V231.5 H56.5Z M56.5 225.2 H67.5" fill="#f4f4f4" stroke="#555" stroke-width="0.8"/>
<path d="M33.5 239 L33.5 247 L25.5 247Z" fill="#555"/>
<path d="M42 241.5 A3.2 3.2 0 1 1 48 241.5 Q47 244 46.6 245.5 H43.4 Q43 244 42 241.5Z" fill="#f3e47a" stroke="#a89850" stroke-width="0.5"/><rect x="43.5" y="245.8" width="3" height="1.8" fill="#777"/>
<path d="M57 247.5 V240 L59 238.5 H61 V242 L63 241 H66 Q67.5 241 67.5 243 V247.5Z M61 242 V247.5" fill="none" stroke="#444" stroke-width="1.1"/>
<path d="M38.5 254.5 L44.5 259 L38.5 263.5Z" fill="none" stroke="#444" stroke-width="0.9"/>
<path d="M54 257.5 A3.2 3.2 0 1 1 60 257.5 Q59 260 58.6 261.5 H55.4 Q55 260 54 257.5Z" fill="#b8d4f4" stroke="#7a98c0" stroke-width="0.5"/><rect x="55.5" y="261.8" width="3" height="1.8" fill="#777"/>
<path d="M68.5 255 H72.5 L74 256.2 H79.5 V263.5 H68.5Z M68.5 257.2 H79.5" fill="#f4f4f4" stroke="#555" stroke-width="0.8"/>
<path d="M38.5 270.5 L44.5 275 L38.5 279.5Z" fill="none" stroke="#444" stroke-width="0.9"/>
<path d="M54 273.5 A3.2 3.2 0 1 1 60 273.5 Q59 276 58.6 277.5 H55.4 Q55 276 54 273.5Z" fill="#f3e47a" stroke="#a89850" stroke-width="0.5"/><rect x="55.5" y="277.8" width="3" height="1.8" fill="#777"/>
<path d="M68.5 271 H72.5 L74 272.2 H79.5 V279.5 H68.5Z M68.5 273.2 H79.5" fill="#f4f4f4" stroke="#555" stroke-width="0.8"/>
<path d="M45.5 287 L45.5 295 L37.5 295Z" fill="#555"/>
<path d="M54 289.5 A3.2 3.2 0 1 1 60 289.5 Q59 292 58.6 293.5 H55.4 Q55 292 54 289.5Z" fill="#f3e47a" stroke="#a89850" stroke-width="0.5"/><rect x="55.5" y="293.8" width="3" height="1.8" fill="#777"/>
<path d="M68.5 287 H72.5 L74 288.2 H79.5 V295.5 H68.5Z M68.5 289.2 H79.5" fill="#f4f4f4" stroke="#555" stroke-width="0.8"/>
<path d="M66 305.5 A3.2 3.2 0 1 1 72 305.5 Q71 308 70.6 309.5 H67.4 Q67 308 66 305.5Z" fill="#f3e47a" stroke="#a89850" stroke-width="0.5"/><rect x="67.5" y="309.8" width="3" height="1.8" fill="#777"/>
<rect x="81" y="302.5" width="10" height="9" rx="2.5" fill="#f6f6f6" stroke="#555" stroke-width="0.8"/><rect x="84" y="306.5" width="3" height="3" fill="#ccc"/>
<path d="M38.5 318.5 L44.5 323 L38.5 327.5Z" fill="none" stroke="#444" stroke-width="0.9"/>
<path d="M54 321.5 A3.2 3.2 0 1 1 60 321.5 Q59 324 58.6 325.5 H55.4 Q55 324 54 321.5Z" fill="#f3e47a" stroke="#a89850" stroke-width="0.5"/><rect x="55.5" y="325.8" width="3" height="1.8" fill="#777"/>
<rect x="69" y="318" width="10" height="10" rx="2" fill="#f6f6f6" stroke="#444" stroke-width="0.9"/></svg>

<!-- small icon in viewport -->
<div class="a" style="left:344px;top:139px;width:31px;height:13px;background:#f1f1f1"></div>
<svg class="a" style="left:354px;top:140px" width="20" height="11" viewBox="0 0 20 11"><rect x="3" y="3" width="7" height="5" fill="#d8f0f8"/><path d="M2.5 2.5 H10.5 M2.5 8.5 H10.5" stroke="#3a4a50" stroke-width="1.1"/><path d="M5 3.8 L9.5 5.5 L5 7.2Z" fill="#2a6a88"/><path d="M13 4.5 H16.5 L14.75 6.5Z" fill="#111"/></svg>

<!-- JOINT DIALOG -->
<div class="a" style="left:959px;top:230px;width:166px;height:194px;background:#f0f0f0;border:1px solid #cfcfcf;box-shadow:0 0 2px rgba(0,0,0,0.15)"></div>
<div class="a" style="left:960px;top:246px;width:164px;height:1px;background:#d4d4d4"></div>
<div class="a" style="left:962px;top:234px;width:7px;height:7px;border-radius:50%;background:#333"></div>
<div class="a" style="left:963.5px;top:237px;width:4px;height:1px;background:#eee"></div>
<div class="t" style="left:975px;top:235px;font-size:7px;color:#555">JOINT</div>
<div class="t" style="left:961.5px;top:253.5px;font-size:6.5px;color:#333">&#x25BC;</div>
<div class="t" style="left:970px;top:252.5px;font-size:7.5px;color:#333;font-weight:bold">Components</div>
<div class="t" style="left:967px;top:272.5px;font-size:7px;color:#444">Component1</div>
<div class="a" style="left:1016px;top:268px;width:52px;height:17px;background:#fff;border:1px solid #dcdcdc"></div>
<svg class="a" style="left:1020px;top:270px" width="10" height="12" viewBox="0 0 10 12"><path d="M1 1 L1 10 L3.5 8 L5.5 11.5 L7 10.8 L5 7.5 L8 7.5Z" fill="none" stroke="#666" stroke-width="0.8"/></svg>
<div class="t" style="left:1031px;top:272.5px;font-size:7px;color:#555">1 selected</div>
<svg class="a" style="left:1074.5px;top:273px" width="8" height="8" viewBox="0 0 8 8"><path d="M1 1 L7 7 M7 1 L1 7" stroke="#444" stroke-width="1.5"/></svg>
<div class="t" style="left:967px;top:292.5px;font-size:7px;color:#444">Component2</div>
<div class="a" style="left:1016px;top:287px;width:39px;height:19px;background:#1a86d0"></div>
<svg class="a" style="left:1020px;top:291px" width="8" height="10" viewBox="0 0 8 10"><path d="M1 0.5 L1 8.5 L3 6.8 L4.6 9.6 L5.8 9 L4.2 6.2 L6.8 6.2Z" fill="#fff"/></svg>
<div class="t" style="left:1030px;top:292.5px;font-size:7px;color:#fff">Select</div>
<div class="t" style="left:961.5px;top:313.5px;font-size:6.5px;color:#333">&#x25BC;</div>
<div class="t" style="left:970px;top:312.5px;font-size:7.5px;color:#333;font-weight:bold">Alignment</div>
<div class="t" style="left:967px;top:332.5px;font-size:7px;color:#444">Flip</div>
<div class="a" style="left:1016px;top:328px;width:15px;height:18px;background:#1a86d0"></div>
<svg class="a" style="left:1018px;top:331px" width="11" height="11" viewBox="0 0 11 11"><path d="M2.5 8.5 L8.5 2.5" stroke="#123" stroke-width="1.2"/><path d="M1.5 9.5 L2 6.5 L4.5 9Z M9.5 1.5 L9 4.5 L6.5 2Z" fill="#123"/></svg>
<div class="t" style="left:961.5px;top:353.5px;font-size:6.5px;color:#333">&#x25BC;</div>
<div class="t" style="left:970px;top:352.5px;font-size:7.5px;color:#333;font-weight:bold">Motion</div>
<div class="t" style="left:967px;top:372.5px;font-size:7px;color:#444">Type</div>
<div class="a" style="left:1016px;top:367px;width:99px;height:19px;background:#fff;border:1px solid #dcdcdc"></div>
<svg class="a" style="left:1019px;top:371px" width="10" height="10" viewBox="0 0 10 10"><path d="M1 1 H9 M1 9 H9" stroke="#58a" stroke-width="0.8"/><path d="M3 5 H8 M6 3 L8 5 L6 7" stroke="#3a80c0" stroke-width="1" fill="none"/></svg>
<div class="t" style="left:1032px;top:372.5px;font-size:7px;color:#444">Slider</div>
<div class="t" style="left:1107px;top:374px;font-size:5px;color:#333">&#x25BC;</div>
<div class="a" style="left:960px;top:401px;width:164px;height:1px;background:#d8d8d8"></div>
<div class="a" style="left:965px;top:408px;width:8px;height:8px;border-radius:50%;background:#222"></div>
<div class="t" style="left:968px;top:409px;font-size:6px;color:#fff;font-weight:bold">i</div>
<div class="a" style="left:1031px;top:406px;width:40px;height:13px;background:#e6e6e6;border:1px solid #dadada"></div>
<div class="t" style="left:1045px;top:409px;font-size:7px;color:#c4c4c4">OK</div>
<div class="a" style="left:1077px;top:406px;width:41px;height:13px;background:#e4e4e4;border:1px solid #cfcfcf"></div>
<div class="t" style="left:1084px;top:408.5px;font-size:7.3px;color:#555">Cancel</div>

<!-- VIEW CUBE -->
<svg class="a" style="left:1190px;top:58px" width="90" height="80" viewBox="1190 58 90 80">
 <path d="M1237.7 78.8 L1260.6 88.1 L1237.7 100.1 L1214.3 88.1Z" fill="#f0f0f0" fill-opacity="0.8" stroke="#888" stroke-width="0.7"/>
 <path d="M1214.3 88.1 L1237.7 100.1 L1237.7 127.7 L1216.4 113.6Z" fill="#e8e8e8" fill-opacity="0.8" stroke="#888" stroke-width="0.7"/>
 <path d="M1237.7 100.1 L1260.6 88.1 L1258.5 114.2 L1237.7 127.7Z" fill="#e2e2e2" fill-opacity="0.8" stroke="#888" stroke-width="0.7"/>
 <text x="1231" y="91" font-size="4.5" fill="#666" transform="rotate(-25 1236 90)" font-family="Liberation Sans">TOP</text>
 <text x="1218" y="109" font-size="4.5" fill="#666" transform="rotate(28 1226 107)" font-family="Liberation Sans">RIGHT</text>
 <text x="1242" y="112" font-size="4.5" fill="#666" transform="rotate(-28 1248 110)" font-family="Liberation Sans">BACK</text>
 <path d="M1237.7 71 V78" stroke="#6a6ad0" stroke-width="1"/>
 <text x="1234.5" y="72" font-size="8" fill="#7a7ae0" font-family="Liberation Sans">Z</text>
 <path d="M1216 113 L1211 116" stroke="#e07070" stroke-width="0.8"/>
 <text x="1206.5" y="121" font-size="7" fill="#e87878" font-family="Liberation Sans">X</text>
 <text x="1263" y="120" font-size="7" fill="#8ad08a" font-family="Liberation Sans">Y</text>
</svg>

<!-- NAV BAR -->
<div class="a" style="left:555px;top:641px;width:168px;height:16px;background:#f0f0f0"></div>
<svg class="a" style="left:555px;top:641px" width="168" height="16" viewBox="555 641 168 16">
 <path d="M559 649 Q562 643 566 645 Q569 649 566 653 Q561 655 559 649Z" fill="none" stroke="#555" stroke-width="0.8"/>
 <path d="M557 649 H560" stroke="#555" stroke-width="0.8"/>
 <path d="M572 648 L575 648 L573.5 650Z" fill="#333"/>
 <rect x="579" y="646" width="10" height="7" fill="none" stroke="#444" stroke-width="0.9"/><rect x="581" y="648" width="6" height="3" fill="none" stroke="#444" stroke-width="0.6"/>
 <path d="M598 653 Q597 648 598 645 V647 Q599 644 600 645 V647 Q601 643.5 602 645 V647 Q603 644 604 645.5 V648 Q605 646 606 647 Q605 652 603 654Z" fill="none" stroke="#444" stroke-width="0.8"/>
 <circle cx="617" cy="648" r="3" fill="none" stroke="#333" stroke-width="1"/><path d="M619 650 L622 653 M621 645 H624 M621 648 H623" stroke="#333" stroke-width="1"/>
 <rect x="632" y="644.5" width="9" height="9" fill="none" stroke="#aaa" stroke-width="0.5"/>
 <circle cx="636" cy="648" r="3.2" fill="#e8f0f4" stroke="#333" stroke-width="1"/><path d="M638.5 650.5 L641.5 653.5" stroke="#333" stroke-width="1.3"/>
 <path d="M646 648 L649 648 L647.5 650Z" fill="#333"/>
 <rect x="659" y="644" width="10" height="8" fill="#8ab0d8" stroke="#445" stroke-width="0.8"/><path d="M662 654 H666 M664 652 V654" stroke="#445" stroke-width="0.8"/>
 <path d="M671 648 L674 648 L672.5 650Z" fill="#333"/>
 <rect x="680.5" y="644.5" width="10" height="10" fill="#f4f4f4" stroke="#444" stroke-width="0.9"/>
 <path d="M683 644.5 V654.5 M685.5 644.5 V654.5 M688 644.5 V654.5 M680.5 647 H690.5 M680.5 649.5 H690.5 M680.5 652 H690.5" stroke="#555" stroke-width="0.55"/>
 <path d="M692 648 L695 648 L693.5 650Z" fill="#333"/>
 <rect x="700" y="644" width="10" height="10" fill="#8aaad8" stroke="#667" stroke-width="0.6"/>
 <path d="M712 648 L715 648 L713.5 650Z" fill="#333"/>
</svg>

<!-- COMMENTS -->
<div class="a" style="left:3px;top:641px;width:199px;height:16px;background:#f0f0f0;border:1px solid #e0e0e0"></div>
<div class="t" style="left:19.5px;top:646px;font-size:6.8px;color:#6a6a6a">COMMENTS</div>
<div class="a" style="left:188px;top:646px;width:6px;height:6px;border-radius:50%;background:#333"></div>
<div class="a" style="left:199px;top:645px;width:1px;height:8px;background:#555"></div>


<div id="tl" class="a">
<svg class="a" style="left:0;top:0" width="1280" height="32" viewBox="0 660 1280 32">
<path d="M8 672.5 V681.5" stroke="#333" stroke-width="1.6"/><path d="M15.5 672.5 V681.5 L9.5 677Z" fill="#333"/>
<path d="M31 673 V681 L25 677Z" fill="#333"/><rect x="31" y="675.5" width="1.5" height="3" fill="#333"/>
<path d="M41 672 V682 L48.5 677Z" fill="#333"/>
<path d="M58 673 V681 L64 677Z" fill="#333"/><rect x="56.5" y="675.5" width="1.5" height="3" fill="#333"/>
<path d="M74.5 672.5 V681.5 L80.5 677Z" fill="#333"/><path d="M81.5 672.5 V681.5" stroke="#333" stroke-width="1.6"/>
<g ><rect x="97.6" y="671.6" width="10" height="10" fill="#eef2f6" stroke="#1e2430" stroke-width="1.2"/><path d="M100 672.5 H106.5 V679Z" fill="#e2b850"/><path d="M99.5 673.5 V679.5 H105.5" fill="none" stroke="#3a4a60" stroke-width="0.9"/><path d="M100.5 678.5 L105 674" stroke="#2a3a50" stroke-width="0.8"/></g>
<g ><path d="M113 674 L115 672 H120 V681 L118 683 H113Z" fill="#a8c8e8" stroke="#556" stroke-width="0.7"/><path d="M122.5 682 V672.5 M121.3 674 L122.5 672 L123.7 674" stroke="#333" stroke-width="0.8" fill="none"/></g>
<g ><rect x="129.6" y="671.6" width="10" height="10" fill="#eef2f6" stroke="#1e2430" stroke-width="1.2"/><path d="M132 672.5 H138.5 V679Z" fill="#e2b850"/><path d="M131.5 673.5 V679.5 H137.5" fill="none" stroke="#3a4a60" stroke-width="0.9"/><path d="M132.5 678.5 L137 674" stroke="#2a3a50" stroke-width="0.8"/></g>
<g ><path d="M145 674 L147 672 H152 V681 L150 683 H145Z" fill="#a8c8e8" stroke="#556" stroke-width="0.7"/><path d="M154.5 682 V672.5 M153.3 674 L154.5 672 L155.7 674" stroke="#333" stroke-width="0.8" fill="none"/></g>
<g ><rect x="161.6" y="671.6" width="10" height="10" fill="#eef2f6" stroke="#1e2430" stroke-width="1.2"/><path d="M164 672.5 H170.5 V679Z" fill="#e2b850"/><path d="M163.5 673.5 V679.5 H169.5" fill="none" stroke="#3a4a60" stroke-width="0.9"/><path d="M164.5 678.5 L169 674" stroke="#2a3a50" stroke-width="0.8"/></g>
<g ><path d="M177 674 L179 672 H184 V681 L182 683 H177Z" fill="#a8c8e8" stroke="#556" stroke-width="0.7"/><path d="M186.5 682 V672.5 M185.3 674 L186.5 672 L187.7 674" stroke="#333" stroke-width="0.8" fill="none"/></g>
<rect x="194" y="671" width="5" height="7" fill="none" stroke="#666" stroke-width="0.8"/><rect x="196" y="677" width="5" height="5" fill="#fff" stroke="#2a80d0" stroke-width="0.9"/><path d="M201 680 H205 M203.5 678.5 L205 680 L203.5 681.5" stroke="#333" stroke-width="0.8" fill="none"/>
<g ><rect x="209" y="671.5" width="11" height="10.5" rx="2" fill="#f0f0f0" stroke="#555" stroke-width="0.8"/></g>
<g ><rect x="225.6" y="671.6" width="10" height="10" fill="#eef2f6" stroke="#1e2430" stroke-width="1.2"/><path d="M228 672.5 H234.5 V679Z" fill="#e2b850"/><path d="M227.5 673.5 V679.5 H233.5" fill="none" stroke="#3a4a60" stroke-width="0.9"/><path d="M228.5 678.5 L233 674" stroke="#2a3a50" stroke-width="0.8"/></g>
<g ><path d="M241 674 L243 672 H248 V681 L246 683 H241Z" fill="#a8c8e8" stroke="#556" stroke-width="0.7"/><path d="M250.5 682 V672.5 M249.3 674 L250.5 672 L251.7 674" stroke="#333" stroke-width="0.8" fill="none"/></g>
<g ><rect x="257.6" y="671.6" width="10" height="10" fill="#eef2f6" stroke="#1e2430" stroke-width="1.2"/><path d="M260 672.5 H266.5 V679Z" fill="#e2b850"/><path d="M259.5 673.5 V679.5 H265.5" fill="none" stroke="#3a4a60" stroke-width="0.9"/><path d="M260.5 678.5 L265 674" stroke="#2a3a50" stroke-width="0.8"/></g>
<g ><path d="M273 674 L275 672 H280 V681 L278 683 H273Z" fill="#a8c8e8" stroke="#556" stroke-width="0.7"/><path d="M282.5 682 V672.5 M281.3 674 L282.5 672 L283.7 674" stroke="#333" stroke-width="0.8" fill="none"/></g>
<g ><rect x="288" y="669" width="15" height="15" fill="#dcdcdc"/><path d="M291 676 L295.5 672 L300 676 V682 H297 V678 H294 V682 H291Z" fill="#e8a040" stroke="#666" stroke-width="0.7"/></g>
<path d="M305 676 L309 672 L310 682 L306 681Z M316 676 L312 672 L311 682 L315 681Z" fill="#ddd" stroke="#555" stroke-width="0.7"/>
<g opacity="0.35"><rect x="321" y="671.5" width="11" height="10.5" rx="2" fill="#f0f0f0" stroke="#555" stroke-width="0.8"/></g>
<g opacity="0.3"><path d="M338 676 L342.5 672 L347 676 V682 H344 V678 H341 V682 H338Z" fill="#e8a040" stroke="#666" stroke-width="0.7"/></g>
<g opacity="0.3"><circle cx="357" cy="675" r="3.5" fill="none" stroke="#555"/><rect x="358" y="677" width="6" height="5" fill="none" stroke="#555"/></g>
<g opacity="0.3"><path d="M374.5 671 V682 M369 676.5 H380" stroke="#333" stroke-width="1"/><circle cx="374.5" cy="676.5" r="2" fill="#555"/></g>
<g opacity="0.3"><path d="M385 676 L389 672 L390 682 L386 681Z M396 676 L392 672 L391 682 L395 681Z" fill="#ddd" stroke="#555" stroke-width="0.7"/></g>
<g opacity="0.35"><rect x="401" y="671.5" width="11" height="10.5" rx="2" fill="#f0f0f0" stroke="#555" stroke-width="0.8"/></g>
<g opacity="0.35"><rect x="417.6" y="671.6" width="10" height="10" fill="#eef2f6" stroke="#1e2430" stroke-width="1.2"/><path d="M420 672.5 H426.5 V679Z" fill="#e2b850"/><path d="M419.5 673.5 V679.5 H425.5" fill="none" stroke="#3a4a60" stroke-width="0.9"/><path d="M420.5 678.5 L425 674" stroke="#2a3a50" stroke-width="0.8"/></g>
<g opacity="0.35"><path d="M433 674 L435 672 H440 V681 L438 683 H433Z" fill="#a8c8e8" stroke="#556" stroke-width="0.7"/><path d="M442.5 682 V672.5 M441.3 674 L442.5 672 L443.7 674" stroke="#333" stroke-width="0.8" fill="none"/></g>
<g opacity="0.35"><rect x="449.6" y="671.6" width="10" height="10" fill="#eef2f6" stroke="#1e2430" stroke-width="1.2"/><path d="M452 672.5 H458.5 V679Z" fill="#e2b850"/><path d="M451.5 673.5 V679.5 H457.5" fill="none" stroke="#3a4a60" stroke-width="0.9"/><path d="M452.5 678.5 L457 674" stroke="#2a3a50" stroke-width="0.8"/></g>
<g opacity="0.35"><path d="M465 674 L467 672 H472 V681 L470 683 H465Z" fill="#a8c8e8" stroke="#556" stroke-width="0.7"/><path d="M474.5 682 V672.5 M473.3 674 L474.5 672 L475.7 674" stroke="#333" stroke-width="0.8" fill="none"/></g>
<path d="M103 687.5 H474" stroke="#b8b8b8" stroke-width="0.8"/>
<path d="M103 685 V688" stroke="#b8b8b8" stroke-width="0.6"/>
<path d="M119 685 V688" stroke="#b8b8b8" stroke-width="0.6"/>
<path d="M135 685 V688" stroke="#b8b8b8" stroke-width="0.6"/>
<path d="M151 685 V688" stroke="#b8b8b8" stroke-width="0.6"/>
<path d="M167 685 V688" stroke="#b8b8b8" stroke-width="0.6"/>
<path d="M183 685 V688" stroke="#b8b8b8" stroke-width="0.6"/>
<path d="M199 685 V688" stroke="#b8b8b8" stroke-width="0.6"/>
<path d="M215 685 V688" stroke="#b8b8b8" stroke-width="0.6"/>
<path d="M231 685 V688" stroke="#b8b8b8" stroke-width="0.6"/>
<path d="M247 685 V688" stroke="#b8b8b8" stroke-width="0.6"/>
<path d="M263 685 V688" stroke="#b8b8b8" stroke-width="0.6"/>
<path d="M279 685 V688" stroke="#b8b8b8" stroke-width="0.6"/>
<path d="M295 685 V688" stroke="#b8b8b8" stroke-width="0.6"/>
<path d="M311 685 V688" stroke="#b8b8b8" stroke-width="0.6"/>
<path d="M327 685 V688" stroke="#b8b8b8" stroke-width="0.6"/>
<path d="M343 685 V688" stroke="#b8b8b8" stroke-width="0.6"/>
<path d="M359 685 V688" stroke="#b8b8b8" stroke-width="0.6"/>
<path d="M375 685 V688" stroke="#b8b8b8" stroke-width="0.6"/>
<path d="M391 685 V688" stroke="#b8b8b8" stroke-width="0.6"/>
<path d="M407 685 V688" stroke="#b8b8b8" stroke-width="0.6"/>
<path d="M423 685 V688" stroke="#b8b8b8" stroke-width="0.6"/>
<path d="M439 685 V688" stroke="#b8b8b8" stroke-width="0.6"/>
<path d="M455 685 V688" stroke="#b8b8b8" stroke-width="0.6"/>
<path d="M471 685 V688" stroke="#b8b8b8" stroke-width="0.6"/>
<path d="M315.5 667 H322.5 L320 671.5 V688.5 H318 V671.5Z" fill="#555"/>
<circle cx="1266" cy="677" r="3.8" fill="none" stroke="#444" stroke-width="2.4" stroke-dasharray="1.7 1.1"/><circle cx="1266" cy="677" r="3.4" fill="none" stroke="#444" stroke-width="1.6"/><circle cx="1266" cy="677" r="1.2" fill="#f0f0f0"/>
</svg>
</div>
<div id="task" class="a">
<svg class="a" style="left:0;top:0" width="1280" height="27" viewBox="0 693 1280 27">
 <!-- windows -->
 <path d="M10.5 702 L15.6 701.3 V705.8 H10.5Z M16.5 701.2 L22 700.4 V705.8 H16.5Z M10.5 706.7 H15.6 V711.2 L10.5 710.5Z M16.5 706.7 H22 V712 L16.5 711.3Z" fill="#fff"/>
 <!-- search -->
 <circle cx="49.5" cy="704" r="3.6" fill="none" stroke="#ddd" stroke-width="1.1"/><path d="M46.8 706.8 L43 711" stroke="#ddd" stroke-width="1.3"/>
 <!-- task view -->
 <rect x="75" y="703" width="7" height="7" fill="none" stroke="#ddd" stroke-width="1"/><path d="M75 701 H82 M75 711.5 H82 M84.5 701 V711.5" stroke="#ddd" stroke-width="1"/>
 <!-- chrome -->
 <circle cx="114" cy="706" r="7.5" fill="#db4437"/>
 <path d="M114 706 L120.5 709.8 A7.5 7.5 0 0 1 107.5 709.8Z" fill="#f4c20d"/>
 <path d="M114 706 L107.5 709.8 A7.5 7.5 0 0 1 107.5 702.2 L114 698.5Z" fill="#0f9d58"/>
 <path d="M114 706 L120.5 709.8 A7.5 7.5 0 0 0 120.5 702.2Z" fill="#f4c20d"/>
 <circle cx="114" cy="706" r="3.3" fill="#fff"/><circle cx="114" cy="706" r="2.5" fill="#4285f4"/>
 <rect x="101" y="718" width="26" height="2" fill="#9ac4ee"/>
 <!-- explorer -->
 <rect x="139" y="701" width="15" height="12" fill="#f0d070"/><rect x="139" y="699.5" width="6" height="2" fill="#e8c050"/>
 <rect x="142" y="707" width="9" height="5" fill="#5ab0d8"/>
 <!-- mail -->
 <rect x="171" y="701" width="16" height="11" fill="#f4f4f4"/><path d="M171 701 L179 707 L187 701" stroke="#222" stroke-width="1.2" fill="none"/>
 <!-- store -->
 <path d="M204 703 H219 V713.5 H204Z" fill="#f4f4f4"/><path d="M208.5 703 V700.5 Q211.5 697.5 214.5 700.5 V703" stroke="#eee" stroke-width="1" fill="none"/>
 <rect x="208.5" y="705" width="2.8" height="2.8" fill="#f25022"/><rect x="212" y="705" width="2.8" height="2.8" fill="#7fba00"/><rect x="208.5" y="708.5" width="2.8" height="2.8" fill="#00a4ef"/><rect x="212" y="708.5" width="2.8" height="2.8" fill="#ffb900"/>
 <!-- fusion highlighted -->
 <rect x="229" y="692" width="32" height="28" fill="#3a3a3a"/>
 <rect x="237" y="698" width="16" height="16" fill="#f6e4c8"/>
 <path d="M241 701 H249 V703.5 H244 V706 H248 V708.5 H244 V712 H241Z" fill="#e89030"/>
 <rect x="229" y="718" width="32" height="2" fill="#9ac4ee"/>
 <!-- Ai -->
 <rect x="270" y="698.5" width="15" height="15" fill="#2a1a0a" stroke="#d07a30" stroke-width="1"/>
 <text x="272" y="710" font-size="8.5" fill="#f0902a" font-family="Liberation Sans">Ai</text>
 <rect x="264" y="718" width="27" height="2" fill="#9ac4ee"/>
 <!-- word -->
 <rect x="307" y="699.5" width="11" height="13" fill="#f4f4f4"/><rect x="302" y="700.5" width="10" height="11" fill="#2b579a"/>
 <text x="303" y="709.5" font-size="7.5" fill="#fff" font-family="Liberation Sans" font-weight="bold">W</text>
 <path d="M313 703 H317 M313 705.5 H317 M313 708 H317" stroke="#2b579a" stroke-width="0.8"/>
 <rect x="297" y="718" width="26" height="2" fill="#9ac4ee"/>
 <!-- red app -->
 <rect x="335" y="698.5" width="15" height="15" fill="#d42020"/>
 <ellipse cx="342.5" cy="706" rx="4.5" ry="3" fill="none" stroke="#f4d0d0" stroke-width="1.2"/>
 <rect x="329" y="718" width="27" height="2" fill="#9ac4ee"/>
 <!-- tray -->
 <g stroke="#ddd" fill="none" stroke-width="1">
  <circle cx="1099" cy="703" r="2"/><path d="M1095 711 Q1095 706 1098 706 Q1101 706 1101 711"/><circle cx="1095.5" cy="705" r="1.5"/>
  <path d="M1117.5 708.5 L1121.5 704.5 L1125.5 708.5"/>
  <path d="M1149.5 711 Q1149.5 703 1157.5 703 M1152 711 Q1152 705.5 1157.5 705.5 M1154.5 711 Q1154.5 708 1157.5 708"/>
  <path d="M1168.5 705 Q1170 707 1168.5 709 M1171 703 Q1174 707 1171 711"/>
 </g>
 <path d="M1132 709.5 Q1132 706.5 1135 706.5 Q1136 703.5 1139 704 Q1142 704.5 1142 707 Q1144 707.5 1143.5 709.5Z" fill="#f0f0f0"/>
 <path d="M1162.5 705 H1165 L1168 702.5 V711.5 L1165 709 H1162.5Z" fill="#ddd"/>
 <text x="1181.5" y="709.5" font-size="7.5" fill="#eee" font-family="Liberation Sans">ENG</text>
 <text x="1207.5" y="704" font-size="7.9" fill="#eee" font-family="Liberation Sans">3:15 AM</text>
 <text x="1205" y="715.5" font-size="7.6" fill="#eee" font-family="Liberation Sans">09-Feb-19</text>
 <path d="M1253 700 H1265 V709 H1258 L1255 712 V709 H1253Z" fill="#f4f4f4"/>
 <path d="M1255 702.5 H1263 M1255 705 H1263" stroke="#222" stroke-width="0.8"/>
 <circle cx="1265" cy="711" r="4" fill="#333" stroke="#aaa" stroke-width="0.6"/><text x="1263" y="713.5" font-size="6" fill="#fff" font-family="Liberation Sans">4</text>
 <rect x="1274" y="692" width="1" height="28" fill="#555"/>
</svg>

</div>
</body></html>
